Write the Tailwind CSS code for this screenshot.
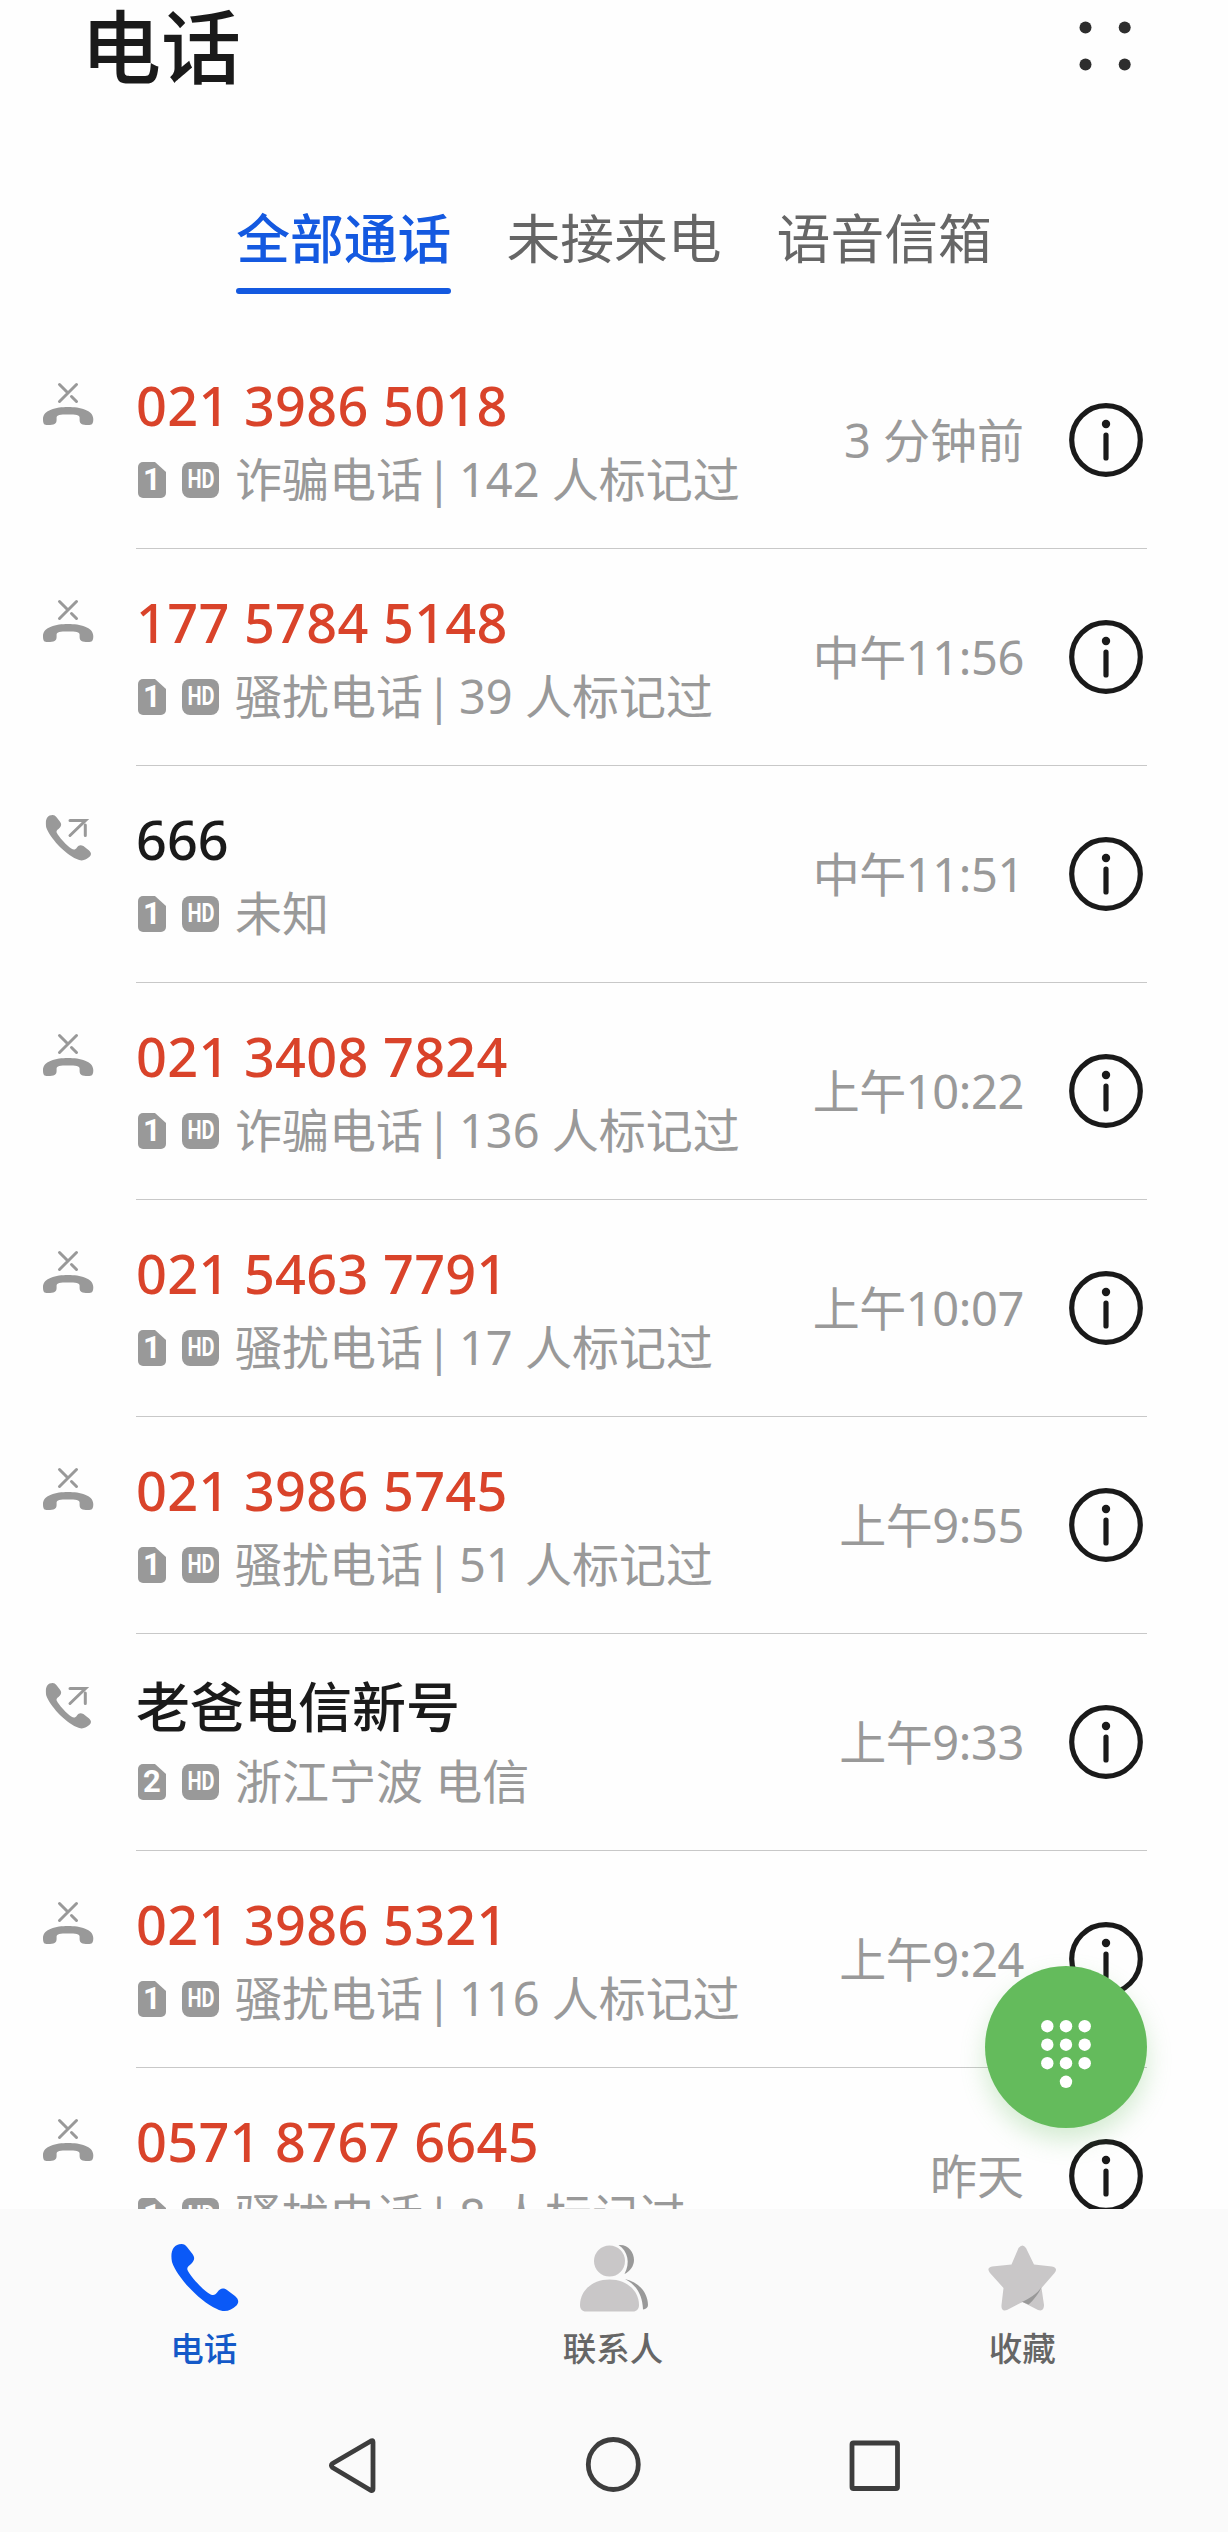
<!DOCTYPE html>
<html lang="zh-CN">
<head>
<meta charset="utf-8">
<title>电话</title>
<script src="https://cdn.jsdelivr.net/npm/@tailwindcss/browser@4"></script>
</head>
<body class="bg-[#fefefe] font-['Noto_Sans','Noto_Sans_CJK_SC',sans-serif] text-[#1a1a1a]">
<svg class="hidden">
  <symbol id="handset" viewBox="0 0 68 68"><path d="M10.6 0C13 0 14.5 1 16 3L21.5 10C24 13.5 23.5 16 21 19C18 22 15.500 23 16.500 26C19 32 32 46 38 49.500C42 52 44 51.500 46.500 48C49 44.500 52 43.500 56 46L64 52C68 55.500 68 58.500 65.500 61.500C60 67 53 69 46 65C28 57 6 33 1 18C-1 8 2 0 10.600 0Z"/></symbol>
  <symbol id="missed" viewBox="0 0 136 217">
    <path d="M59.500 52.500L68 61M71.500 64.500L76.500 69.500M76.500 52.500L59.500 69.500" fill="none" stroke="#999" stroke-width="3" stroke-linecap="round"/>
    <path d="M43 87C43 78 56 75 68 75S93.300 78 93.300 87C93.300 92 92 93 88 93C82 93 79.600 92 79.600 88V85.500C79.600 83 76 82.500 68 82.500S56.600 83 56.600 85.500V88C56.600 92 54 93 48 93C44 93 43 92 43 87Z" fill="#999"/>
  </symbol>
  <symbol id="outgoing" viewBox="0 0 136 217">
    <use href="#handset" x="45.500" y="49" width="46" height="46" fill="#999"/>
    <path d="M70 54.500H85.500L70 69.500M85.300 59V69.500" fill="none" stroke="#999" stroke-width="3" stroke-linecap="round"/>
  </symbol>
  <symbol id="info" viewBox="0 0 76 76">
    <circle cx="38" cy="38" r="34.300" fill="none" stroke="#1a1a1a" stroke-width="5.200"/>
    <circle cx="38" cy="22" r="4.200" fill="#1a1a1a"/>
    <path d="M38 33V56" stroke="#1a1a1a" stroke-width="5.200" stroke-linecap="round"/>
  </symbol>
  <symbol id="sim" viewBox="0 0 28 36"><path d="M5 0H17L28 10V31a5 5 0 0 1-5 5H5a5 5 0 0 1-5-5V5a5 5 0 0 1 5-5Z" fill="#999"/></symbol>
</svg>

<div class="relative h-[2532px] w-[1228px] overflow-hidden">
  <header class="flex h-[332px] flex-col">
    <div class="flex h-[92px] items-center justify-between pr-[97px] pl-[81px]">
      <h1 class="text-[80px] leading-[90px] font-medium">电话</h1>
      <svg class="size-[52px]" viewBox="0 0 52 52" fill="#2e2e2e"><circle cx="6.500" cy="7.500" r="6"/><circle cx="45.700" cy="7.500" r="6"/><circle cx="6.500" cy="44.500" r="6"/><circle cx="45.700" cy="44.500" r="6"/></svg>
    </div>
    <nav class="mt-[106px] flex justify-center gap-[55px] text-[53.800px] leading-[80px] text-[#666]">
      <div class="flex flex-col font-medium text-[#1459e0]"><span>全部通话</span><i class="mt-2.5 h-1.5 rounded-full bg-[#1459e0]"></i></div>
      <div>未接来电</div>
      <div>语音信箱</div>
    </nav>
  </header>

  <main id="calls" class="h-[1877px] overflow-hidden"></main>

  <footer class="h-[323px] bg-[#fafafa]">
    <div class="grid grid-cols-3 pt-[35px] text-center text-[33.500px] leading-[50px] font-medium text-[#666]">
      <div class="flex flex-col items-center gap-[11px] text-[#1459c8]">
        <svg class="h-[68px] w-[72px]" viewBox="0 0 72 68" fill="#0a59f7"><use href="#handset" x="2" width="68" height="68"/></svg>
        <span class="pr-0.5">电话</span>
      </div>
      <div class="flex flex-col items-center gap-[11px]">
        <svg class="h-[68px] w-[72px]" viewBox="0 0 72 68">
          <g fill="#999"><path d="M40.500 1C50 0 56 8 56 16C56 22 52 27.500 46.500 30C52.500 19 50 7 40.500 1Z"/><path d="M47 35C61 38 70 49 70 61C70 63.500 68 65 65 65.500C64.500 51 58.500 41 47 35Z"/></g>
          <g fill="#c9c7c8"><circle cx="31.500" cy="17" r="15.500"/><path d="M2 61C2 47 14 35.500 31.500 35.500S61 47 61 61C61 65 58.500 67.500 55 67.500H8C4 67.500 2 65 2 61Z"/></g>
        </svg>
        <span class="pr-0.5">联系人</span>
      </div>
      <div class="flex flex-col items-center gap-[11px]">
        <svg class="h-[68px] w-[72px]" viewBox="0 0 72 68">
          <path d="M31.500 4Q35.500-1 39 4L47 20.500L65 22.500Q71.500 24 67.500 29L54.500 44L57 61Q57 68 51 66L35.500 58L20 66Q14 68 14.500 61L16.500 44L3 29Q-1 24 5 22.500L24.500 20.500Z" fill="#c9c7c8"/>
          <path d="M54.500 43C50 50 42 55 34 58.200L35.500 58L41.500 60.500C47 56 52 49 54.500 43Z" fill="#999"/>
        </svg>
        <span class="pr-0.5">收藏</span>
      </div>
    </div>
    <svg class="mt-[60px] ml-[320px] h-[66px] w-[590px]" viewBox="320 2433 590 66" fill="none" stroke="#3d3d3d" stroke-width="4.800" stroke-linejoin="round">
      <path d="M332.500 2463.500Q330.500 2465.500 332.500 2467.500L371 2490.500Q373 2491 373 2489V2442Q373 2440 371 2441Z"/>
      <circle cx="613.300" cy="2464.500" r="25"/>
      <rect x="852" y="2443" width="45.500" height="45.500" rx="1.500"/>
    </svg>
  </footer>

  <button class="absolute top-[1966px] left-[985px] flex size-[162px] items-center justify-center rounded-full bg-[#64bb5c] shadow-[0_12px_24px_rgba(100,187,92,0.28)]" aria-label="拨号盘">
    <svg class="mt-3.5 h-[68px] w-[50px]" viewBox="0 0 50 68" fill="#fff">
      <circle cx="6.300" cy="6.200" r="6.200"/><circle cx="25" cy="6.200" r="6.200"/><circle cx="43.700" cy="6.200" r="6.200"/>
      <circle cx="6.300" cy="24.700" r="6.200"/><circle cx="25" cy="24.700" r="6.200"/><circle cx="43.700" cy="24.700" r="6.200"/>
      <circle cx="6.300" cy="43.200" r="6.200"/><circle cx="25" cy="43.200" r="6.200"/><circle cx="43.700" cy="43.200" r="6.200"/>
      <circle cx="25" cy="61.800" r="6.200"/>
    </svg>
  </button>
</div>

<script>
const calls = [
  ['021 3986 5018', 1, '诈骗电话|142 人标记过', '3 分钟前', 'missed'],
  ['177 5784 5148', 1, '骚扰电话|39 人标记过', '中午11:56', 'missed'],
  ['666', 1, '未知', '中午11:51', 'outgoing'],
  ['021 3408 7824', 1, '诈骗电话|136 人标记过', '上午10:22', 'missed'],
  ['021 5463 7791', 1, '骚扰电话|17 人标记过', '上午10:07', 'missed'],
  ['021 3986 5745', 1, '骚扰电话|51 人标记过', '上午9:55', 'missed'],
  ['老爸电信新号', 2, '浙江宁波 电信', '上午9:33', 'outgoing'],
  ['021 3986 5321', 1, '骚扰电话|116 人标记过', '上午9:24', 'missed'],
  ['0571 8767 6645', 1, '骚扰电话|8 人标记过', '昨天', 'missed'],
];
const bar = '<span class="mr-[7px] ml-[3px]">|</span>';
document.getElementById('calls').innerHTML = calls.map(([name, sim, note, time, kind]) => `
  <div class="flex h-[217px]">
    <svg class="h-[217px] w-[136px] shrink-0"><use href="#${kind}"/></svg>
    <div class="mr-[81px] flex grow items-center justify-between border-b border-[#c8c8c8] whitespace-nowrap">
      <div class="flex flex-col pt-[5px]">
        <div class="text-[54px] leading-[74px] font-medium ${kind === 'missed' ? 'tracking-[0.3px] text-[#d9432a]' : 'text-[#1a1a1a]'}">${name}</div>
        <div class="flex h-[75px] items-center text-[47px] leading-[75px] text-[#999]">
          <span class="relative ml-0.5 flex h-9 w-7 items-center justify-center"><svg class="absolute inset-0 h-9 w-7"><use href="#sim"/></svg><b class="relative font-[Roboto] text-[31px] leading-9 text-white">${sim}</b></span>
          <span class="ml-4 flex h-9 w-[37px] items-center justify-center rounded-lg bg-[#999] font-[Roboto] text-[25px] leading-9 font-bold text-white"><span class="scale-x-80">HD</span></span>
          <span class="ml-4">${note.replace('|', bar)}</span>
        </div>
      </div>
      <div class="flex items-center gap-11 text-[47px] leading-[74px] text-[#999]">
        <span class="${time.includes(':') ? 'tracking-[-0.4px]' : ''}">${time}</span>
        <svg class="mr-[3px] size-[76px]"><use href="#info"/></svg>
      </div>
    </div>
  </div>`).join('');
</script>
</body>
</html>
